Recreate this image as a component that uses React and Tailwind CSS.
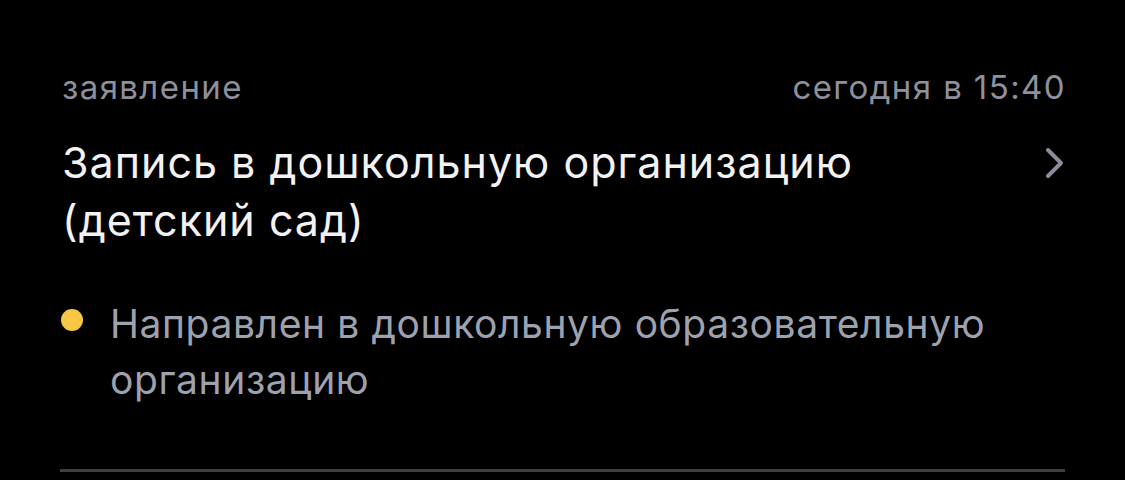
import React from 'react';

const ChevronRight = () => (
  <svg width="22" height="32" viewBox="0 0 22 32" fill="none">
    <path d="M5 3 L18 16 L5 29" stroke="#8b8e9a" strokeWidth="4" strokeLinecap="round" strokeLinejoin="round" />
  </svg>
);

const App = () => {
  return (
    <div className="w-[1125px] h-[480px] bg-black overflow-hidden" style={{ fontFamily: 'Inter, "Noto Sans", sans-serif' }}>
      <div className="px-[60px] pt-[67px]">
        {/* Header row */}
        <div className="flex items-center justify-between text-[33px] leading-[40px] tracking-[1.4px] text-[#8e909c] pl-[2px]">
          <span>заявление</span>
          <span className="mr-[-1px]">сегодня в 15:40</span>
        </div>

        {/* Title */}
        <div className="flex items-start justify-between mt-[26px] pl-[2px]">
          <h2 className="text-[43px] leading-[58px] tracking-[1px] text-[#f2f2f4] font-normal">
            Запись в дошкольную организацию
            <br />
            (детский сад)
          </h2>
          <div className="pt-[14px]">
            <ChevronRight />
          </div>
        </div>

        {/* Status */}
        <div className="flex items-start mt-[47px]">
          <div className="w-[50px] pt-[13px] pl-[1px] shrink-0">
            <div className="w-[22px] h-[22px] rounded-full bg-[#f6c744]" />
          </div>
          <p className="text-[39px] leading-[56px] tracking-[0.6px] text-[#9ea1ae]">
            Направлен в дошкольную образовательную
            <br />
            организацию
          </p>
        </div>

        {/* Divider */}
        <div className="mt-[61px] h-[3px] bg-[#3d3d43]" />
      </div>
    </div>
  );
};

export default App;
